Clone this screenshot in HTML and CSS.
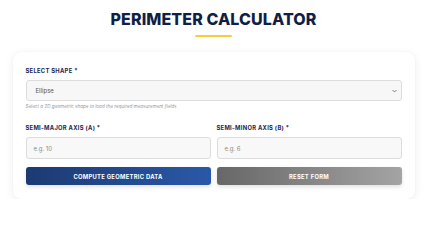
FILE: index.html
```html
<!DOCTYPE html>
<html lang="en">
<head>
<meta charset="utf-8">
<title>Perimeter Calculator</title>
<link rel="stylesheet" href="styles.css">
</head>
<body>
<main class="page">
  <header class="header">
    <h1 class="title">PERIMETER CALCULATOR</h1>
    <div class="underline"></div>
  </header>
  <section class="card">
    <div class="field">
      <label class="label">SELECT SHAPE *</label>
      <div class="select">
        <span>Ellipse</span>
        <svg class="chev" width="5" height="4" viewBox="0 0 5 4"><path d="M0.5 1 L2.5 3 L4.5 1" fill="none" stroke="#666" stroke-width="0.8"/></svg>
      </div>
      <p class="help">Select a 2D geometric shape to load the required measurement fields</p>
    </div>
    <div class="grid">
      <div class="col">
        <label class="label">SEMI-MAJOR AXIS (A) *</label>
        <div class="input">e.g. 10</div>
      </div>
      <div class="col">
        <label class="label">SEMI-MINOR AXIS (B) *</label>
        <div class="input">e.g. 6</div>
      </div>
    </div>
    <div class="grid buttons">
      <button class="btn btn-primary">COMPUTE GEOMETRIC DATA</button>
      <button class="btn btn-reset">RESET FORM</button>
    </div>
  </section>
</main>
</body>
</html>
```
FILE: styles.css
```css
* { box-sizing: border-box; }
html, body { margin: 0; padding: 0; background: #ffffff; }
body { font-family: "Inter", "Liberation Sans", sans-serif; color: #0f1f45; }
.page { width: 402px; margin: 0 auto; padding-top: 9px; }
.header { display: flex; flex-direction: column; align-items: center; }
.title {
  margin: 0;
  font-size: 16px;
  line-height: 20px;
  font-weight: 800;
  letter-spacing: 0.1px;
  color: #0f1f45;
}
.underline { width: 37px; height: 2px; background: #f3cf3f; margin-top: 6px; border-radius: 1px; }
.card {
  margin-top: 15px;
  background: #fff;
  border-radius: 8px;
  box-shadow: 0 2px 10px rgba(20, 30, 60, 0.07), 0 0 1px rgba(20,30,60,0.08);
  padding: 15px 13px 14px;
}
.label {
  display: block;
  font-size: 5.8px;
  line-height: 8px;
  font-weight: 700;
  letter-spacing: 0.3px;
  color: #1b2550;
  margin-bottom: 5px;
}
.select {
  height: 21px;
  border: 1px solid #dcdcdc;
  border-radius: 3px;
  background: #f7f7f7;
  display: flex;
  align-items: center;
  justify-content: space-between;
  padding: 0 4px 0 9px;
  font-size: 6px;
  color: #555;
}
.help {
  margin: 3px 0 0;
  font-size: 4.6px;
  line-height: 6px;
  font-style: italic;
  color: #9a9a9a;
}
.grid {
  display: grid;
  grid-template-columns: 1fr 1fr;
  column-gap: 6px;
  margin-top: 14px;
}
.input {
  height: 22px;
  border: 1px solid #dcdcdc;
  border-radius: 3px;
  background: #f8f8f8;
  display: flex;
  align-items: center;
  padding: 0 7px;
  font-size: 6px;
  color: #8a8a8a;
}
.buttons { margin-top: 8px; }
.btn {
  height: 18px;
  border: none;
  border-radius: 3px;
  font-family: inherit;
  font-size: 5.8px;
  font-weight: 700;
  letter-spacing: 0.3px;
  color: #fff;
  padding: 0;
  box-shadow: 0 2px 4px rgba(0,0,0,0.12);
}
.btn-primary { background: linear-gradient(90deg, #1c3a72, #2a58a8); }
.btn-reset { background: linear-gradient(90deg, #676767, #a4a4a4); }
```
